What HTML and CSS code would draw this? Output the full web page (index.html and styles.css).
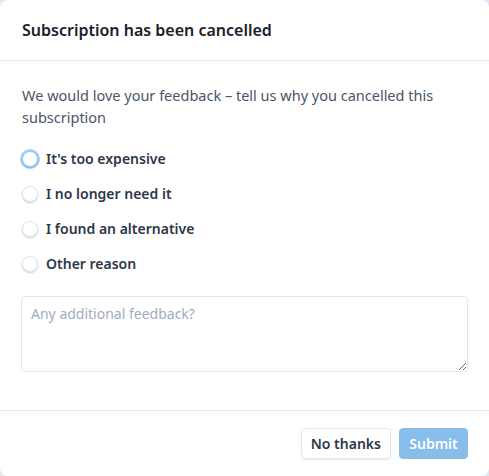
FILE: index.html
```html
<!DOCTYPE html>
<html>
<head>
<meta charset="utf-8">
<link rel="stylesheet" href="styles.css">
</head>
<body>
<div class="modal">
  <header class="modal-header">
    <h2 class="title">Subscription has been cancelled</h2>
  </header>
  <section class="modal-body">
    <p class="intro">We would love your feedback – tell us why you cancelled this subscription</p>
    <div class="options">
      <label class="option"><span class="radio focused"></span><span class="opt-label">It's too expensive</span></label>
      <label class="option"><span class="radio"></span><span class="opt-label">I no longer need it</span></label>
      <label class="option"><span class="radio"></span><span class="opt-label">I found an alternative</span></label>
      <label class="option"><span class="radio"></span><span class="opt-label">Other reason</span></label>
    </div>
    <textarea class="feedback" placeholder="Any additional feedback?"></textarea>
  </section>
  <footer class="modal-footer">
    <button class="btn btn-secondary">No thanks</button>
    <button class="btn btn-primary">Submit</button>
  </footer>
</div>
</body>
</html>
```
FILE: styles.css
```css
* { box-sizing: border-box; }
html, body { margin: 0; padding: 0; background: #e2e8f0; }
body { font-family: "Noto Sans", "Open Sans", sans-serif; color: #2d3748; }
.modal {
  width: 489px;
  height: 476px;
  background: #fff;
  border-radius: 8px;
  display: flex;
  flex-direction: column;
}
.modal-header {
  height: 61px;
  padding: 0 22px;
  display: flex;
  align-items: center;
  border-bottom: 1px solid #e2e8f0;
}
.title {
  margin: 0;
  font-size: 16px;
  font-weight: 600;
  color: #1a202c;
}
.modal-body {
  padding: 23px 21px 0 21px;
  flex: 1;
  display: flex;
  flex-direction: column;
  border-bottom: 1px solid #e2e8f0;
}
.intro {
  margin: 0 0 0 1px;
  font-size: 14.5px;
  line-height: 22px;
  color: #4a5568;
}
.options {
  margin-top: 13px;
  display: flex;
  flex-direction: column;
}
.option {
  height: 35px;
  display: flex;
  align-items: center;
  gap: 8px;
  font-size: 14px;
  font-weight: 600;
  color: #2d3748;
}
.radio {
  width: 16px;
  height: 16px;
  border-radius: 50%;
  border: 1px solid #e2e8f0;
  background: #fff;
  box-shadow: 0 1px 2px rgba(0,0,0,0.2);
  margin-left: 1px;
}
.radio.focused {
  box-shadow: 0 0 0 2px rgba(66,153,225,0.45), 0 1px 2px rgba(0,0,0,0.2);
  border-color: #90cdf4;
}
.feedback {
  margin-top: 15px;
  width: 447px;
  height: 76px;
  border: 1px solid #e2e8f0;
  border-radius: 4px;
  padding: 7px 9px;
  font-family: inherit;
  font-size: 14px;
  color: #2d3748;
}
.feedback::placeholder { color: #a0aec0; }
.modal-footer {
  height: 65px;
  padding: 0 21px;
  display: flex;
  align-items: center;
  justify-content: flex-end;
  gap: 8px;
}
.btn {
  height: 31px;
  border-radius: 4px;
  font-family: inherit;
  font-size: 14px;
  font-weight: 600;
  padding: 0 9px;
}
.btn-secondary {
  background: #fff;
  border: 1px solid #e2e8f0;
  color: #2d3748;
  box-shadow: 0 1px 2px rgba(0,0,0,0.08);
}
.btn-primary {
  background: #87bdea;
  border: 1px solid #87bdea;
  color: #fff;
  width: 69px;
}
```
